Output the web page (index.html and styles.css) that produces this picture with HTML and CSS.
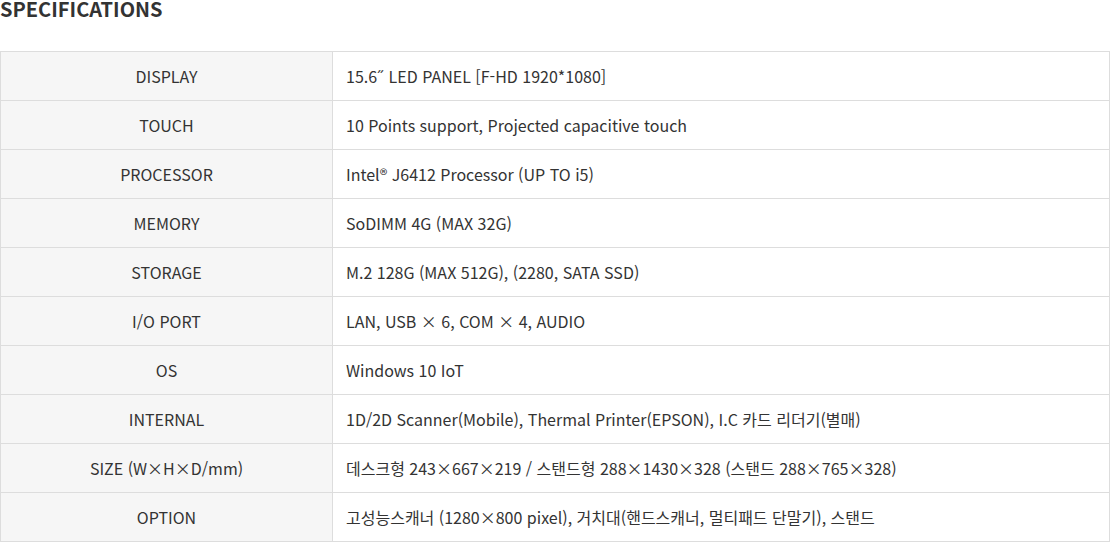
FILE: index.html
```html
<!DOCTYPE html>
<html lang="ko">
<head>
<meta charset="utf-8">
<link rel="stylesheet" href="styles.css">
</head>
<body>
<div class="spec">
  <h3 class="spec-title">SPECIFICATIONS</h3>
  <table class="spec-table">
    <tbody>
      <tr><th>DISPLAY</th><td>15.6˝ LED PANEL [F-HD 1920*1080]</td></tr>
      <tr><th>TOUCH</th><td>10 Points support, Projected capacitive touch</td></tr>
      <tr><th>PROCESSOR</th><td>Intel® J6412 Processor (UP TO i5)</td></tr>
      <tr><th>MEMORY</th><td>SoDIMM 4G (MAX 32G)</td></tr>
      <tr><th>STORAGE</th><td>M.2 128G (MAX 512G), (2280, SATA SSD)</td></tr>
      <tr><th>I/O PORT</th><td>LAN, USB × 6, COM × 4, AUDIO</td></tr>
      <tr><th>OS</th><td>Windows 10 IoT</td></tr>
      <tr><th>INTERNAL</th><td>1D/2D Scanner(Mobile), Thermal Printer(EPSON), I.C 카드 리더기(별매)</td></tr>
      <tr><th>SIZE (W×H×D/mm)</th><td>데스크형 243×667×219 / 스탠드형 288×1430×328 (스탠드 288×765×328)</td></tr>
      <tr><th>OPTION</th><td>고성능스캐너 (1280×800 pixel), 거치대(핸드스캐너, 멀티패드 단말기), 스탠드</td></tr>
    </tbody>
  </table>
</div>
</body>
</html>
```
FILE: styles.css
```css
html, body {
  margin: 0;
  padding: 0;
  background: #fff;
}
body {
  font-family: "Noto Sans CJK KR", "Noto Sans", sans-serif;
  color: #333;
}
.spec {
  width: 1110px;
}
.spec-title {
  margin: 0;
  font-size: 20px;
  font-weight: 700;
  line-height: 15px;
  padding-top: 1px;
  height: 50px;
  color: #333;
}
.spec-table {
  width: 100%;
  border-collapse: collapse;
  border-top: 1px solid #ddd;
  border-right: 1px solid #ddd;
  border-left: 1px solid #ddd;
  table-layout: fixed;
}
.spec-table th,
.spec-table td {
  height: 48px;
  padding: 0;
  border-bottom: 1px solid #ddd;
  font-size: 16px;
  font-weight: 400;
  color: #333;
  vertical-align: middle;
}
.spec-table th {
  width: 331px;
  background: #f6f6f6;
  text-align: center;
  border-right: 1px solid #ddd;
}
.spec-table td {
  padding-left: 13px;
  text-align: left;
}
```
